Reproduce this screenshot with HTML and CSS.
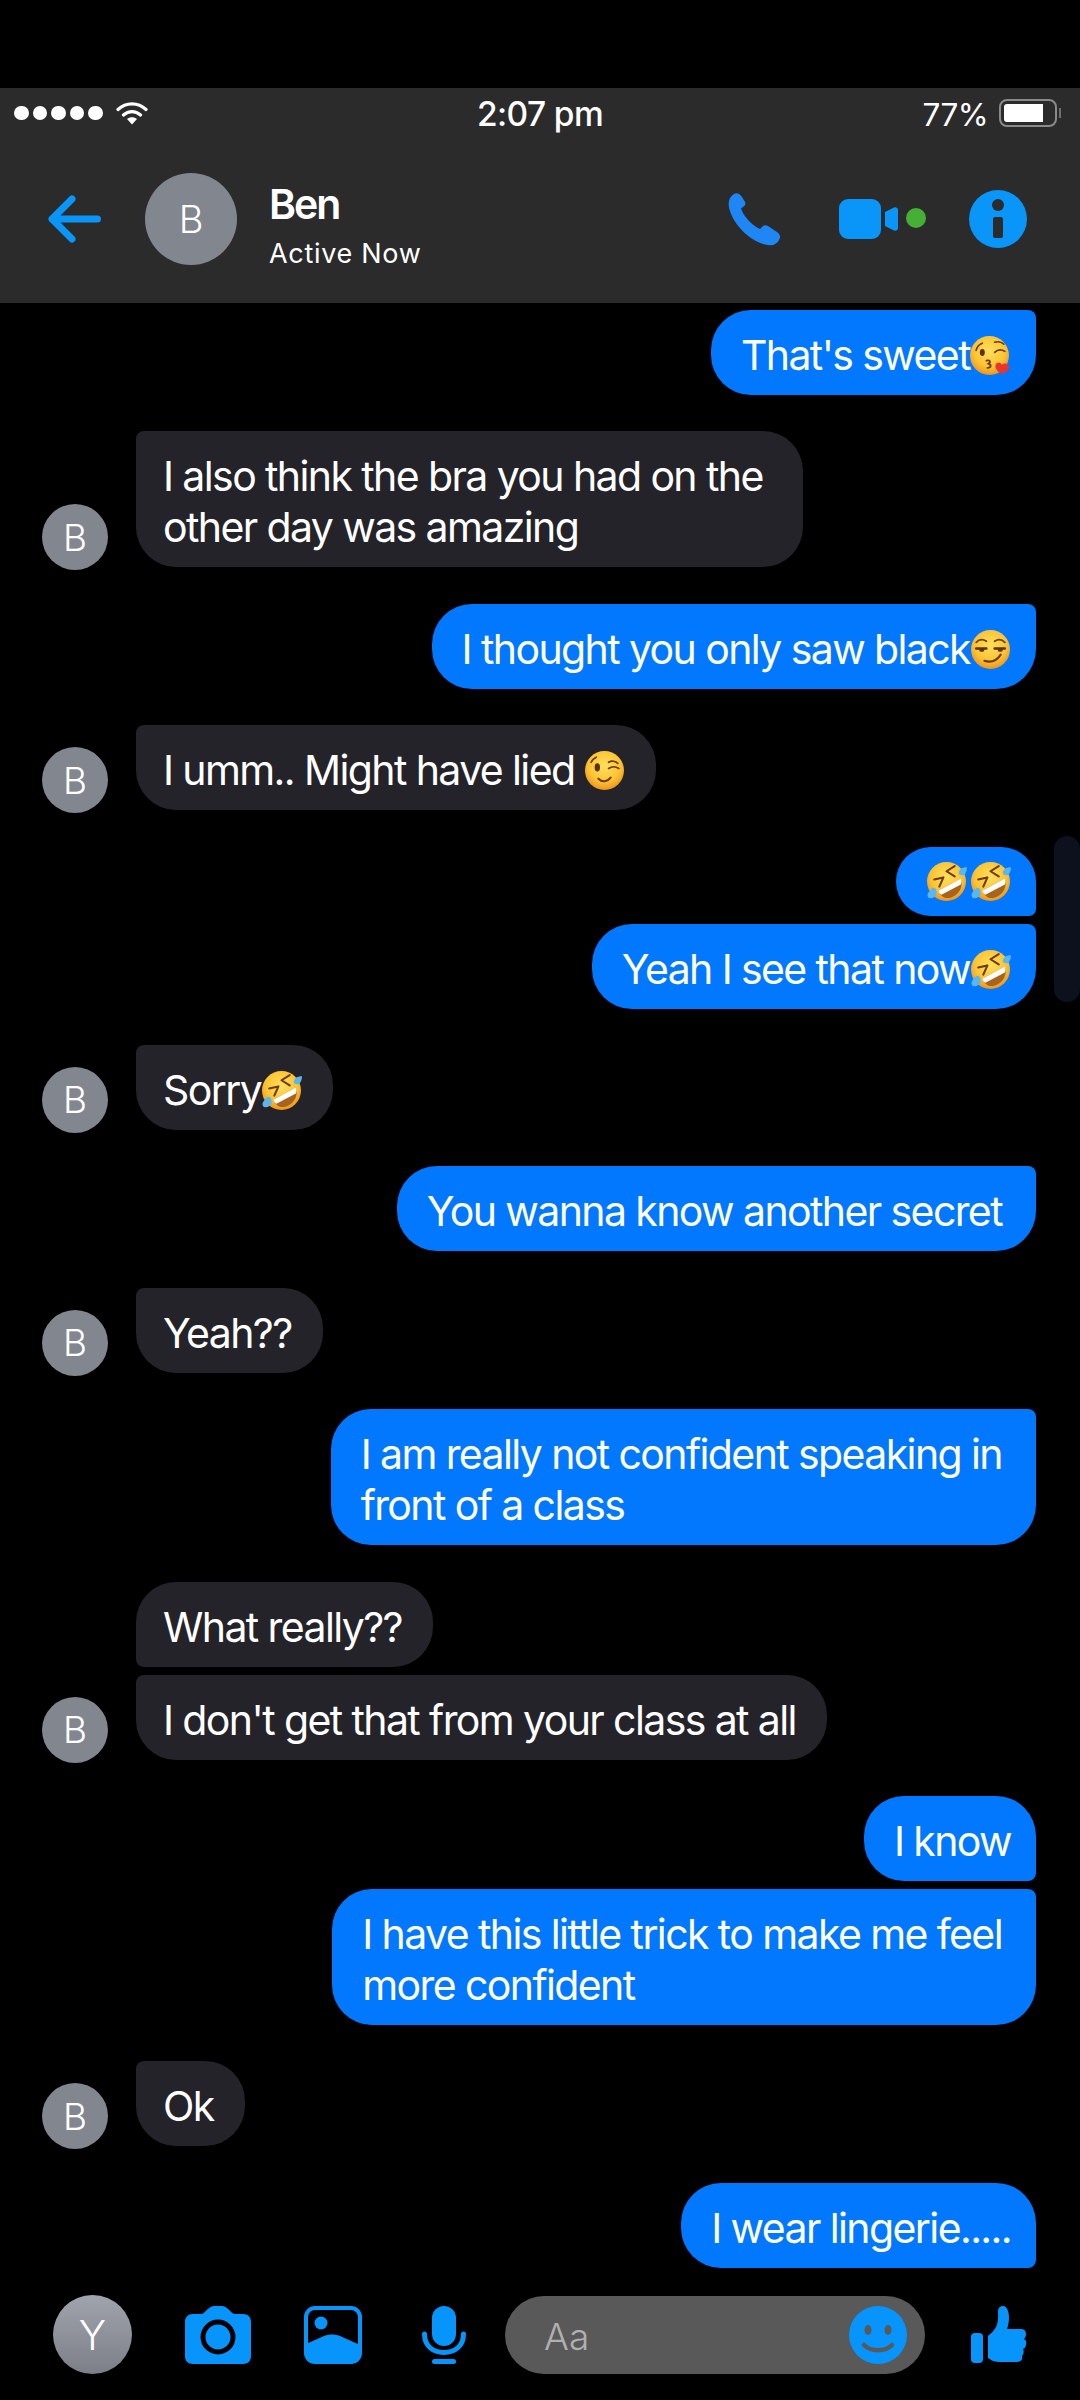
FILE: index.html
```html
<!doctype html>
<html lang="en">
  <head>
    <meta charset="UTF-8" />
    <title>Ben</title>
    <link rel="stylesheet" href="styles.css">
  </head>
  <body>
    <svg class="sprite" xmlns="http://www.w3.org/2000/svg">
      <defs>
        <radialGradient id="face" cx="50%" cy="38%" r="62%">
          <stop offset="0" stop-color="#ffdf5e" />
          <stop offset="0.65" stop-color="#fcc433" />
          <stop offset="1" stop-color="#ee9420" />
        </radialGradient>
        <symbol id="kiss" viewBox="0 0 40 40">
          <circle cx="19" cy="20" r="19" fill="url(#face)" />
          <path d="M6 15C7 11 9 9 12 8M24 7C27 6 31 7 33 9M24 17C27 14 31 14 34 16M25 14" fill="none" stroke="#6b3a10" stroke-width="1.6" stroke-linecap="round" />
          <ellipse cx="12" cy="17" rx="2.4" ry="3.4" fill="#5b3210" />
          <path d="M16 25C19 24 21 26 18 28C21 29 21 32 17 32" fill="none" stroke="#6b3a10" stroke-width="1.8" stroke-linecap="round" />
          <path d="M31 38C26 35 24 32 25 29C26 26 30 26 31 29C33 27 38 27 38 31C39 34 35 37 31 38Z" fill="#e8352e" />
        </symbol>
        <symbol id="smirk" viewBox="0 0 40 40">
          <circle cx="20" cy="20" r="19" fill="url(#face)" />
          <path d="M6 13C9 10 13 10 16 12M24 12C27 10 31 10 34 13" fill="none" stroke="#6b3a10" stroke-width="1.6" stroke-linecap="round" />
          <path d="M6 19H16M24 19H34" fill="none" stroke="#5b3210" stroke-width="2.4" stroke-linecap="round" />
          <ellipse cx="11.500" cy="20.500" rx="2.500" ry="1.800" fill="#5b3210" />
          <ellipse cx="29.500" cy="20.500" rx="2.500" ry="1.800" fill="#5b3210" />
          <path d="M14 31C20 33 26 31 30 25" fill="none" stroke="#6b3a10" stroke-width="2" stroke-linecap="round" />
        </symbol>
        <symbol id="wink" viewBox="0 0 40 40">
          <circle cx="20" cy="20" r="19" fill="url(#face)" />
          <path d="M7 12C8 9 10 8 12 7M24 12C27 10 31 11 33 13M24 18C27 16 31 16 34 18" fill="none" stroke="#6b3a10" stroke-width="1.6" stroke-linecap="round" />
          <ellipse cx="13" cy="17" rx="2.6" ry="4" fill="#5b3210" />
          <path d="M14 28C18 32 23 31 26 27" fill="none" stroke="#6b3a10" stroke-width="2" stroke-linecap="round" />
        </symbol>
        <symbol id="rofl" viewBox="0 0 40 40">
          <circle cx="20" cy="20" r="19" fill="url(#face)" />
          <path d="M28 5L20 10L28 15M8 18L17 16L13 25" fill="none" stroke="#6b3a10" stroke-width="2" stroke-linecap="round" stroke-linejoin="round" />
          <path d="M12 29L34 17C37 26 31 35 22 36C18 37 14 34 12 29Z" fill="#a8641c" />
          <path d="M12 29L34 17C34.8 19 34.8 21 34 23L15 33C13.5 32 12.5 30.5 12 29Z" fill="#fff" />
          <path d="M32 12C32 8 35 6 40 6C40 10 38 14 35 14C33.5 14 32 13 32 12Z" fill="#5cb6ee" />
          <path d="M8 26C10 27 11 30 10 33C9 36 5 37 3 36C1 35 1 32 3 30C4 28 6 26 8 26Z" fill="#5cb6ee" />
        </symbol>
      </defs>
    </svg>

    <div class="top-gap"></div>

    <header class="header">
      <div class="status-bar">
        <div class="status-left">
          <div class="signal">
            <span class="dot"></span><span class="dot"></span><span class="dot"></span><span class="dot"></span><span class="dot"></span>
          </div>
          <svg class="wifi" viewBox="0 0 32 24">
            <path d="M2 8.500C10 1 22 1 30 8.500M7.500 14C12.500 9.500 19.500 9.500 24.500 14" fill="none" stroke="#fff" stroke-width="3.2" stroke-linecap="round" />
            <path d="M11 18C14 15.500 18 15.500 21 18L16 23.500Z" fill="#fff" />
          </svg>
        </div>
        <div class="clock">2:07 pm</div>
        <div class="status-right">
          <span class="percent">77%</span>
          <div class="battery"><div class="battery-fill"></div></div>
          <div class="battery-nub"></div>
        </div>
      </div>

      <div class="nav-bar">
        <svg class="back" viewBox="0 0 53 48">
          <path d="M49.500 24H4M4 24L24 4M4 24L24 44" fill="none" stroke="#0a95f9" stroke-width="7" stroke-linecap="round" stroke-linejoin="round" />
        </svg>
        <div class="nav-avatar">B</div>
        <div class="contact">
          <div class="contact-name">Ben</div>
          <div class="contact-state">Active Now</div>
        </div>
        <div class="nav-actions">
          <svg class="phone" viewBox="0 0 53 53">
            <path d="M7 1C10 -1 13 1 15 4L18 9C19 11 18 13 16 14L14 15.500C16 22 24 32 33 36L35.500 33.500C37 32 39 32 41 33L50 39C53 41 54 44 52 47C50 51 46 53 41 52C28 50 15 40 7 27C2 18 -2 7 7 1Z" fill="#1f86f5" />
          </svg>
          <svg class="video" viewBox="0 0 88 40">
            <rect x="0" y="0" width="42" height="40" rx="9" fill="#0a95f9" />
            <path d="M46 13L55 8.500C57 7.500 59 9 59 11V29C59 31 57 32.500 55 31.500L46 27Z" fill="#0a95f9" />
            <circle cx="77" cy="19" r="10" fill="#45b035" />
          </svg>
          <svg class="info" viewBox="0 0 58 58">
            <circle cx="29" cy="29" r="29" fill="#0a95f9" />
            <circle cx="29" cy="15" r="6" fill="#2b2b2b" />
            <rect x="24" y="27" width="10" height="21" rx="2" fill="#2b2b2b" />
          </svg>
        </div>
      </div>
    </header>

    <main class="thread">
      <div class="row out"><div class="bubble last">That's sweet<svg class="emoji"><use href="#kiss" /></svg></div></div>

      <div class="row in">
        <div class="avatar">B</div>
        <div class="bubble last roomy">I also think the bra you had on the<br>other day was amazing</div>
      </div>

      <div class="row out"><div class="bubble last">I thought you only saw black<svg class="emoji"><use href="#smirk" /></svg></div></div>

      <div class="row in">
        <div class="avatar">B</div>
        <div class="bubble last">I umm.. Might have lied <svg class="emoji"><use href="#wink" /></svg></div>
      </div>

      <div class="row out"><div class="bubble first emoji-only"><svg class="emoji"><use href="#rofl" /></svg><svg class="emoji"><use href="#rofl" /></svg></div></div>
      <div class="row out next"><div class="bubble last">Yeah I see that now<svg class="emoji"><use href="#rofl" /></svg></div></div>

      <div class="row in">
        <div class="avatar">B</div>
        <div class="bubble last">Sorry<svg class="emoji"><use href="#rofl" /></svg></div>
      </div>

      <div class="row out"><div class="bubble last roomy">You wanna know another secret</div></div>

      <div class="row in">
        <div class="avatar">B</div>
        <div class="bubble last">Yeah??</div>
      </div>

      <div class="row out"><div class="bubble last roomy">I am really not confident speaking in<br>front of a class</div></div>

      <div class="row in">
        <div class="avatar avatar-empty"></div>
        <div class="bubble first">What really??</div>
      </div>
      <div class="row in next">
        <div class="avatar">B</div>
        <div class="bubble last">I don't get that from your class at all</div>
      </div>

      <div class="row out"><div class="bubble first">I know</div></div>
      <div class="row out next"><div class="bubble last roomy">I have this little trick to make me feel<br>more confident</div></div>

      <div class="row in">
        <div class="avatar">B</div>
        <div class="bubble last">Ok</div>
      </div>

      <div class="row out"><div class="bubble first">I wear lingerie.....</div></div>
    </main>

    <div class="scroll-thumb"></div>

    <footer class="composer">
      <div class="me">Y</div>
      <svg class="camera" viewBox="0 0 66 58">
        <path d="M8 8H16C19 8 20 5 23 3C25 1 27 0 29 0H37C39 0 41 1 43 3C46 5 47 8 50 8H58C63 8 66 11 66 16V50C66 55 63 58 58 58H8C3 58 0 55 0 50V16C0 11 3 8 8 8Z" fill="#0795fb" />
        <circle cx="33" cy="31" r="15" fill="none" stroke="#000" stroke-width="5" />
      </svg>
      <svg class="gallery" viewBox="0 0 58 58">
        <rect x="2" y="2" width="54" height="54" rx="9" fill="none" stroke="#0795fb" stroke-width="4" />
        <circle cx="17" cy="17" r="6.500" fill="#0795fb" />
        <path d="M2 38L20 30C25 28 31 28 36 30L56 39V50C56 54 54 56 50 56H8C4 56 2 54 2 50Z" fill="#0795fb" />
      </svg>
      <svg class="mic" viewBox="0 0 44 58">
        <rect x="10" y="0" width="24" height="40" rx="12" fill="#0795fb" />
        <path d="M2.500 28C2.500 40 11 46.500 22 46.500C33 46.500 41.500 40 41.500 28" fill="none" stroke="#0795fb" stroke-width="5" stroke-linecap="round" />
        <rect x="10" y="53" width="24" height="5" rx="2.500" fill="#0795fb" />
      </svg>
      <div class="input">
        <span class="placeholder">Aa</span>
        <svg class="smile" viewBox="0 0 58 58">
          <circle cx="29" cy="29" r="29" fill="#0795fb" />
          <ellipse cx="19" cy="24" rx="3.500" ry="5" fill="#595959" />
          <ellipse cx="39" cy="24" rx="3.500" ry="5" fill="#595959" />
          <path d="M15 39C22 46 36 46 43 39" fill="none" stroke="#595959" stroke-width="4.500" stroke-linecap="round" />
        </svg>
      </div>
      <svg class="like" viewBox="0 0 56 58">
        <rect x="0" y="27" width="12" height="30" rx="4" fill="#0795fb" />
        <path d="M17 30C24 24 28 20 27 6C27 2 29 0 32 0C36 0 38 6 38 12C38 16 37 20 36 23H50C54 23 55 26 55 28C55 30 54 32 53 33C55 34 56 36 55 38C55 41 54 42 52 43C53 45 53 48 51 50C52 52 51 56 46 56H28C22 56 19 53 17 52Z" fill="#0795fb" />
      </svg>
    </footer>
  </body>
</html>
```

FILE: styles.css
```css
* {
  box-sizing: border-box;
}
html,
body {
  margin: 0;
  height: 2400px;
  overflow: hidden;
}
body {
  position: relative;
  background-color: #000;
  color: #fff;
  font-family: Inter, "Liberation Sans", sans-serif;
}
.sprite {
  position: absolute;
  width: 0;
  height: 0;
}
.top-gap {
  height: 88px;
}

/* header */
.header {
  height: 215px;
  background-color: #2b2b2b;
}
.status-bar {
  position: relative;
  display: flex;
  align-items: center;
  justify-content: space-between;
  height: 50px;
  padding: 0 19px 0 14px;
}
.status-left {
  display: flex;
  align-items: center;
  gap: 13px;
}
.signal {
  display: flex;
  gap: 4px;
}
.dot {
  width: 14.5px;
  height: 14.5px;
  border-radius: 50%;
  background-color: #fff;
}
.wifi {
  width: 32px;
  height: 24px;
}
.clock {
  position: absolute;
  left: 477px;
  padding-top: 2px;
  font-size: 33.5px;
  font-weight: 500;
  letter-spacing: -0.6px;
}
.status-right {
  display: flex;
  align-items: center;
}
.percent {
  font-size: 31.5px;
  letter-spacing: -0.6px;
  margin-right: 11px;
  padding-top: 2px;
}
.battery {
  width: 58px;
  height: 28px;
  padding: 3px;
  border: 2px solid #8a8a8a;
  border-radius: 8px;
}
.battery-fill {
  width: 39px;
  height: 100%;
  background-color: #fff;
  border-radius: 3px 0 0 3px;
}
.battery-nub {
  width: 2px;
  height: 10px;
  margin-left: 2px;
  background-color: #6f6f6f;
}
.nav-bar {
  display: flex;
  align-items: center;
  height: 165px;
  padding: 0 0 3px 48px;
}
.back {
  width: 53px;
  height: 48px;
}
.nav-avatar {
  display: flex;
  align-items: center;
  justify-content: center;
  width: 92px;
  height: 92px;
  margin-left: 44px;
  border-radius: 50%;
  background-color: #82868f;
  font-size: 38px;
  font-weight: 300;
}
.contact {
  margin-left: 32px;
  padding-top: 12px;
}
.contact-name {
  font-size: 41px;
  line-height: 48px;
  font-weight: 600;
  letter-spacing: -2px;
}
.contact-state {
  margin-top: 10px;
  font-size: 27px;
  line-height: 32px;
  letter-spacing: 0.7px;
}
.nav-actions {
  display: flex;
  align-items: center;
  margin-left: auto;
  padding-right: 53px;
}
.phone {
  width: 53px;
  height: 53px;
}
.video {
  width: 88px;
  height: 40px;
  margin-left: 59px;
}
.info {
  width: 58px;
  height: 58px;
  margin-left: 42px;
}

/* messages */
.thread {
  display: flex;
  flex-direction: column;
  height: 1992px;
  padding-top: 7px;
}
.row {
  display: flex;
  align-items: flex-end;
  margin-top: 36.4px;
}
.row:first-child {
  margin-top: 0;
}
.row.next {
  margin-top: 8px;
}
.row.out {
  justify-content: flex-end;
  padding-right: 44px;
}
.row.in {
  padding-left: 42px;
}
.bubble {
  font-size: 41px;
  line-height: 51px;
  letter-spacing: -1.6px;
  white-space: nowrap;
}
.out .bubble {
  padding: 20px 25px 14px 30px;
  background-color: #0178fe;
  border-radius: 40px;
}
.out .bubble.roomy {
  padding-right: 34px;
}
.in .bubble {
  margin-left: 28px;
  padding: 20px 31px 14px 27px;
  background-color: #242329;
  border-radius: 40px;
}
.in .bubble.roomy {
  padding-right: 40px;
}
.out .bubble.last {
  border-top-right-radius: 8px;
}
.out .bubble.first {
  border-bottom-right-radius: 8px;
}
.in .bubble.last {
  border-top-left-radius: 8px;
}
.in .bubble.first {
  border-bottom-left-radius: 8px;
}
.out .bubble.emoji-only {
  display: flex;
  gap: 3px;
  padding: 14px 25px 14px 30px;
}
.emoji {
  display: inline-block;
  width: 41px;
  height: 41px;
  vertical-align: -6px;
}
.avatar {
  display: flex;
  flex: none;
  align-items: center;
  justify-content: center;
  width: 66px;
  height: 66px;
  margin-bottom: -3px;
  border-radius: 50%;
  background-color: #82868f;
  font-size: 37px;
  font-weight: 300;
}
.avatar-empty {
  visibility: hidden;
}
.scroll-thumb {
  position: absolute;
  top: 836px;
  right: 0;
  width: 26px;
  height: 166px;
  background-color: #0c111d;
  border-radius: 13px;
}

/* bottom bar */
.composer {
  position: absolute;
  top: 2295px;
  left: 0;
  right: 0;
  display: flex;
  align-items: center;
  height: 79px;
  padding-left: 53px;
}
.me {
  display: flex;
  align-items: center;
  justify-content: center;
  width: 79px;
  height: 79px;
  border-radius: 50%;
  background: linear-gradient(#a0a4ad, #7c7f87);
  font-size: 41px;
  font-weight: 300;
}
.camera {
  width: 66px;
  height: 58px;
  margin-left: 53px;
}
.gallery {
  width: 58px;
  height: 58px;
  margin-left: 53px;
}
.mic {
  width: 44px;
  height: 58px;
  margin-left: 60px;
}
.input {
  display: flex;
  align-items: center;
  justify-content: space-between;
  width: 420px;
  height: 78px;
  margin-left: 39px;
  padding: 0 18px 0 39px;
  border-radius: 39px;
  background-color: #595959;
}
.placeholder {
  padding-top: 4px;
  color: #b0b0b0;
  font-size: 37px;
  font-weight: 300;
}
.smile {
  width: 58px;
  height: 58px;
}
.like {
  width: 56px;
  height: 58px;
  margin-left: 46px;
}
```
